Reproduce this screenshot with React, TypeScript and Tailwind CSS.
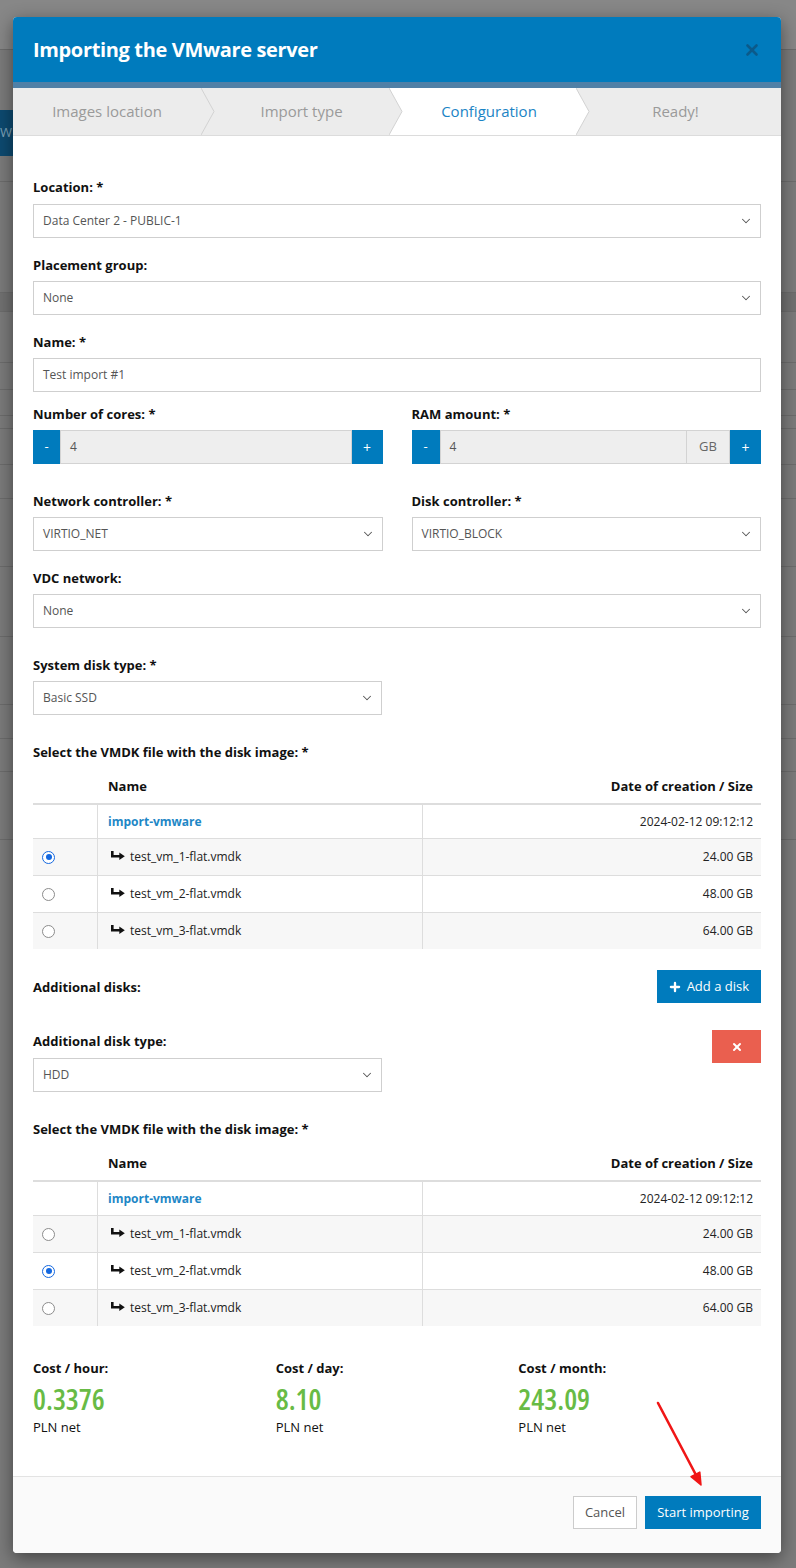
import { ChevronDown, Plus, X } from "lucide-react";

const font = "font-['Open_Sans',_'Noto_Sans',_sans-serif]";

const steps = [
  { label: "Images location", width: "w-[188px]", pad: "" },
  { label: "Import type", width: "w-[188px]", pad: "pl-[13px]" },
  { label: "Configuration", width: "w-[187px]", pad: "pl-[13px]", active: true },
  { label: "Ready!", width: "flex-1", pad: "pr-[6px]", last: true },
];

const files = [
  { name: "test_vm_1-flat.vmdk", size: "24.00 GB" },
  { name: "test_vm_2-flat.vmdk", size: "48.00 GB" },
  { name: "test_vm_3-flat.vmdk", size: "64.00 GB" },
];

function Label({ children, className = "" }: { children: React.ReactNode; className?: string }) {
  return <div className={`text-[13px] font-bold leading-[18px] text-[#111] ${className}`}>{children}</div>;
}

function SelectBox({ value, className = "" }: { value: string; className?: string }) {
  return (
    <div className={`flex h-[34px] items-center justify-between border border-[#cfcfcf] bg-white pl-[9px] pr-[7px] text-[12px] text-[#555] ${className}`}>
      <span>{value}</span>
      <ChevronDown className="h-[14px] w-[14px] text-[#555]" strokeWidth={1.75} />
    </div>
  );
}

function Stepper({ unit, minusWidth }: { unit?: string; minusWidth: string }) {
  return (
    <div className="flex h-[34px]">
      <div className={`flex ${minusWidth} items-center justify-center bg-[#007bbd] text-[13px] text-white`}>-</div>
      <div className="flex flex-1 items-center border border-[#d3d3d3] bg-[#eeeeee] pl-[9px] text-[12px] text-[#555]">4</div>
      {unit ? (
        <div className="flex w-[43px] items-center justify-center border-y border-r border-[#d3d3d3] bg-[#eeeeee] text-[13px] text-[#666]">
          {unit}
        </div>
      ) : null}
      <div className="flex w-[31px] items-center justify-center bg-[#007bbd] text-[14px] text-white">+</div>
    </div>
  );
}

function Radio({ checked }: { checked: boolean }) {
  if (checked) {
    return (
      <span className="flex h-[13px] w-[13px] items-center justify-center rounded-full border-[1.5px] border-[#1468e0] bg-white">
        <span className="h-[6px] w-[6px] rounded-full bg-[#1468e0]" />
      </span>
    );
  }
  return <span className="h-[13px] w-[13px] rounded-full border-[1.5px] border-[#8c8c8c] bg-white" />;
}

function SubArrow() {
  return (
    <svg width="14" height="9" viewBox="0 0 14 9" className="-mt-[4px] mr-[5px] shrink-0">
      <path d="M1.3 0 V5.3 H9.5" fill="none" stroke="#111" strokeWidth="2.6" />
      <polygon points="8.3,1.5 13.8,5.3 8.3,9" fill="#111" />
    </svg>
  );
}

function VmdkTable({ selected }: { selected: number }) {
  return (
    <div className="mt-[9px] text-[12px] text-[#222]">
      <div className="flex h-[35px] items-center border-b-2 border-[#dddddd] text-[13px] font-bold text-[#111]">
        <div className="w-[65px]" />
        <div className="flex-1 pl-[10px]">Name</div>
        <div className="w-[339px] pr-[8px] text-right">Date of creation / Size</div>
      </div>
      <div className="flex h-[34px] border-b border-[#dddddd]">
        <div className="w-[65px] border-r border-[#dddddd]" />
        <div className="flex flex-1 items-center pl-[10px] font-bold text-[#1e87c6]">import-vmware</div>
        <div className="flex w-[339px] items-center justify-end border-l border-[#dddddd] pr-[8px]">2024-02-12 09:12:12</div>
      </div>
      {files.map((f, i) => (
        <div
          key={f.name}
          className={`flex ${i === files.length - 1 ? "h-[36px]" : "h-[37px] border-b border-[#dddddd]"} ${i % 2 === 0 ? "bg-[#f7f7f7]" : "bg-white"}`}
        >
          <div className="flex w-[65px] items-center border-r border-[#dddddd] pl-[9px]">
            <Radio checked={i === selected} />
          </div>
          <div className="flex flex-1 items-center pl-[13px]">
            <SubArrow />
            <span>{f.name}</span>
          </div>
          <div className="flex w-[339px] items-center justify-end border-l border-[#dddddd] pr-[8px]">{f.size}</div>
        </div>
      ))}
    </div>
  );
}

function Cost({ label, value }: { label: string; value: string }) {
  return (
    <div>
      <Label>{label}</Label>
      <div className="mt-[4px] text-[29px] font-semibold leading-[36px] text-[#68bb45] [font-stretch:condensed]">{value}</div>
      <div className="mt-[1px] text-[13px] leading-[18px] text-[#111]">PLN net</div>
    </div>
  );
}

const backdropRows = [
  { h: "h-[50px]", bg: "bg-[#878787]" },
  { h: "h-[132px]", bg: "bg-[#7b7b7b]", chip: true },
  { h: "h-[111px]", bg: "bg-[#7b7b7b]" },
  { h: "h-[19px]", bg: "bg-[#717171]" },
  { h: "h-[51px]", bg: "bg-[#7b7b7b]" },
  { h: "h-[27px]", bg: "bg-[#7b7b7b]" },
  { h: "h-[26px]", bg: "bg-[#7b7b7b]" },
  { h: "h-[13px]", bg: "bg-[#7b7b7b]" },
  { h: "h-[36px]", bg: "bg-[#7b7b7b]" },
  { h: "h-[34px]", bg: "bg-[#7b7b7b]" },
  { h: "h-[68px]", bg: "bg-[#7b7b7b]" },
  { h: "h-[70px]", bg: "bg-[#7b7b7b]" },
  { h: "h-[68px]", bg: "bg-[#7b7b7b]" },
  { h: "h-[34px]", bg: "bg-[#7b7b7b]" },
  { h: "h-[33px]", bg: "bg-[#7b7b7b]" },
  { h: "h-[68px]", bg: "bg-[#7b7b7b]" },
];

export default function App() {
  return (
    <div className={`relative h-[1568px] w-[796px] overflow-hidden bg-[#7b7b7b] ${font}`}>
      {/* dimmed page behind the dialog */}
      <div className="flex flex-col">
        {backdropRows.map((r, i) => (
          <div key={i} className={`${r.h} ${r.bg} border-b border-[#6c6c6c]`}>
            {r.chip ? (
              <div className="mt-[60px] flex h-[46px] w-[13px] items-center overflow-hidden bg-[#0d4a70] text-[13px] text-[#7fa3ba]">W</div>
            ) : null}
          </div>
        ))}
      </div>

      {/* dialog */}
      <div className="absolute left-[13px] top-[17px] w-[768px] overflow-hidden rounded-[4px] bg-white shadow-[0_5px_18px_rgba(0,0,0,0.45)]">
        <div className="flex h-[65px] items-center justify-between bg-[#007bbd] px-[20px]">
          <h1 className="text-[20px] font-bold tracking-[-0.35px] text-white">Importing the VMware server</h1>
          <X className="h-[18px] w-[18px] text-[#0b5a8a]" strokeWidth={3.5} />
        </div>
        <div className="h-[6px] bg-[#5080a6]" />
        <div className="flex h-[48px] border-b border-[#dcdcdc] bg-[#ececec] text-[15px]">
          {steps.map((s) => (
            <div
              key={s.label}
              className={`relative flex ${s.width} items-center justify-center ${s.pad} ${s.active ? "bg-white text-[#1b84c5]" : "text-[#9a9a9a]"}`}
            >
              {s.label}
              {!s.last ? (
                <svg width="14" height="47" viewBox="0 0 14 47" className="absolute left-full top-0 z-10">
                  <polygon points="0,0 13,23.5 0,47" fill={s.active ? "#ffffff" : "#ececec"} />
                  <polyline points="0,0 13,23.5 0,47" fill="none" stroke="#d2d2d2" strokeWidth="1" />
                </svg>
              ) : null}
            </div>
          ))}
        </div>

        <div className="px-[20px] pb-[40px] pt-[42px]">
          <Label>Location: *</Label>
          <SelectBox value="Data Center 2 - PUBLIC-1" className="mt-[8px]" />

          <Label className="mt-[18px]">Placement group:</Label>
          <SelectBox value="None" className="mt-[7px]" />

          <Label className="mt-[18px]">Name: *</Label>
          <div className="mt-[7px] flex h-[34px] items-center border border-[#cfcfcf] pl-[9px] text-[12px] text-[#555]">Test import #1</div>

          <div className="mt-[13px] grid grid-cols-2 gap-x-[29px]">
            <div>
              <Label>Number of cores: *</Label>
              <div className="mt-[7px]">
                <Stepper minusWidth="w-[27px]" />
              </div>
            </div>
            <div>
              <Label>RAM amount: *</Label>
              <div className="mt-[7px]">
                <Stepper minusWidth="w-[28px]" unit="GB" />
              </div>
            </div>
          </div>

          <div className="mt-[28px] grid grid-cols-2 gap-x-[29px]">
            <div>
              <Label>Network controller: *</Label>
              <SelectBox value="VIRTIO_NET" className="mt-[7px]" />
            </div>
            <div>
              <Label>Disk controller: *</Label>
              <SelectBox value="VIRTIO_BLOCK" className="mt-[7px]" />
            </div>
          </div>

          <Label className="mt-[18px]">VDC network:</Label>
          <SelectBox value="None" className="mt-[7px]" />

          <Label className="mt-[28px]">System disk type: *</Label>
          <SelectBox value="Basic SSD" className="mt-[7px] w-[349px]" />

          <Label className="mt-[28px]">Select the VMDK file with the disk image: *</Label>
          <VmdkTable selected={0} />

          <div className="mt-[21px] flex items-center justify-between">
            <Label>Additional disks:</Label>
            <div className="flex h-[33px] items-center bg-[#007bbd] pl-[11px] pr-[12px] text-[13px] text-white">
              <Plus className="mr-[5px] h-[14px] w-[14px]" strokeWidth={4} />
              Add a disk
            </div>
          </div>

          <div className="mt-[27px] flex items-start justify-between">
            <div className="w-[349px] pt-[2px]">
              <Label>Additional disk type:</Label>
              <SelectBox value="HDD" className="mt-[8px]" />
            </div>
            <div className="flex h-[33px] w-[49px] items-center justify-center bg-[#ea5f4f]">
              <X className="h-[12px] w-[12px] text-white" strokeWidth={4} />
            </div>
          </div>

          <Label className="mt-[28px]">Select the VMDK file with the disk image: *</Label>
          <VmdkTable selected={1} />

          <div className="mt-[33px] grid grid-cols-3">
            <Cost label="Cost / hour:" value="0.3376" />
            <Cost label="Cost / day:" value="8.10" />
            <Cost label="Cost / month:" value="243.09" />
          </div>
        </div>

        <div className="flex h-[77px] items-start justify-end gap-[8px] border-t border-[#e3e3e3] bg-[#fafafa] px-[20px] pt-[19px]">
          <div className="flex h-[33px] w-[64px] items-center justify-center border border-[#cccccc] bg-white text-[13px] text-[#555]">Cancel</div>
          <div className="flex h-[33px] w-[116px] items-center justify-center bg-[#007bbd] text-[13px] text-white">Start importing</div>
        </div>
      </div>

      {/* annotation arrow */}
      <svg width="80" height="100" viewBox="0 0 80 100" className="absolute left-[640px] top-[1395px]">
        <line x1="18" y1="8" x2="56" y2="80" stroke="#f01616" strokeWidth="2.6" strokeLinecap="round" />
        <polygon points="61,90 51,81.7 59.8,77.1" fill="#f01616" stroke="#f01616" strokeWidth="1.5" strokeLinejoin="round" />
      </svg>
    </div>
  );
}
